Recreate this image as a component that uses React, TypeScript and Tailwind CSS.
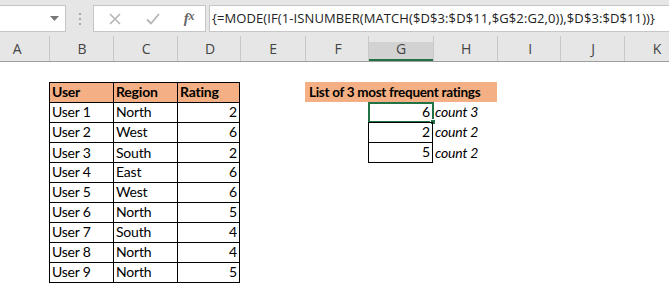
import * as React from 'react'

const cols = 'grid grid-cols-[49px_64px_64px_63px_65px_63px_65px_64px_63px_64px_45px]'
const letters = ['A', 'B', 'C', 'D', 'E', 'F', 'G', 'H', 'I', 'J', 'K']

const users = [
  ['User 1', 'North', 2],
  ['User 2', 'West', 6],
  ['User 3', 'South', 2],
  ['User 4', 'East', 6],
  ['User 5', 'West', 6],
  ['User 6', 'North', 5],
  ['User 7', 'South', 4],
  ['User 8', 'North', 4],
  ['User 9', 'North', 5],
] as const

const results = [
  [6, 'count 3'],
  [2, 'count 2'],
  [5, 'count 2'],
] as const

function FormulaBar() {
  return (
    <div className="flex h-[36px] items-center bg-[#e6e6e6] pt-px">
      <div className="flex h-[27px] w-[66px] items-center justify-end border border-l-0 border-[#c6c6c6] bg-white pr-[6px]">
        <svg width="9" height="5" viewBox="0 0 9 5">
          <path d="M0 0h9L4.5 5z" fill="#777" />
        </svg>
      </div>
      <div className="flex w-[27px] flex-col items-center gap-[3px]">
        <span className="h-[2px] w-[2px] bg-[#a9a9a9]" />
        <span className="h-[2px] w-[2px] bg-[#a9a9a9]" />
        <span className="h-[2px] w-[2px] bg-[#a9a9a9]" />
      </div>
      <div className="flex h-[27px] w-[113px] items-center border border-[#c6c6c6] bg-white">
        <div className="flex w-[42px] justify-center">
          <svg width="12" height="12" viewBox="0 0 12 12">
            <path d="M1 1l10 10M11 1L1 11" stroke="#b4b4b4" strokeWidth="1.6" />
          </svg>
        </div>
        <div className="flex w-[34px] justify-center">
          <svg width="14" height="12" viewBox="0 0 14 12">
            <path d="M1 6.5l4 4L13 1" stroke="#b4b4b4" strokeWidth="1.8" fill="none" />
          </svg>
        </div>
        <div className="flex w-[34px] justify-center pl-[4px] font-['Liberation_Serif',serif] text-[15px] font-bold italic text-[#666]">
          f<span className="text-[12px]">x</span>
        </div>
      </div>
      <div className="ml-[3px] flex h-[27px] flex-1 items-center border border-r-0 border-[#c6c6c6] bg-white pl-[2px] font-['Open_Sans',sans-serif] text-[13px] tracking-[0.1px] text-[#222]">
        {'{=MODE(IF(1-ISNUMBER(MATCH($D$3:$D$11,$G$2:G2,0)),$D$3:$D$11))}'}
      </div>
    </div>
  )
}

function ColumnHeaders() {
  return (
    <div className={`${cols} h-[26px] border-b border-[#9e9e9e] bg-[#e6e6e6] font-['Open_Sans',sans-serif] text-[14px] text-[#444]`}>
      {letters.map((l, i) => (
        <div
          key={l}
          className={`relative overflow-hidden ${i > 0 ? 'border-l border-[#c8c8c8]' : ''}`}
        >
          {l === 'G' && <div className="absolute inset-x-0 top-[6px] bottom-0 border-b-2 border-[#217346] bg-[#d2d2d2]" />}
          <div
            className={`relative flex h-full w-[64px] items-end justify-center pb-[2px] ${i === 0 ? 'ml-[-15px]' : ''}`}
          >
            {l}
          </div>
        </div>
      ))}
    </div>
  )
}

function Row({ children }: { children?: React.ReactNode }) {
  return <div className={`${cols} h-[20px]`}>{children}</div>
}

const cell = 'flex items-end pb-[1px] px-[2px] leading-[18px] whitespace-nowrap'

export default function App() {
  return (
    <div className="h-[308px] w-[669px] overflow-hidden bg-white font-['Lato',sans-serif] text-[14px] tracking-[-0.2px] text-black">
      <FormulaBar />
      <ColumnHeaders />
      <Row />
      <Row>
        <div />
        <div className={`${cell} border-l border-t border-black bg-[#f4b084] font-bold`}>User</div>
        <div className={`${cell} border-l border-t border-black bg-[#f4b084] font-bold`}>Region</div>
        <div className={`${cell} border-x border-t border-black bg-[#f4b084] font-bold`}>Rating</div>
        <div />
        <div className={`${cell} col-span-3 bg-[#f4b084] pl-[4px] text-[13.5px] font-bold tracking-[-0.3px]`}>
          List of 3 most frequent ratings
        </div>
      </Row>
      {users.map(([u, r, n], i) => {
        const res = results[i]
        const last = i === users.length - 1
        return (
          <Row key={u}>
            <div />
            <div className={`${cell} border-l border-t border-black ${last ? 'border-b' : ''}`}>{u}</div>
            <div className={`${cell} border-l border-t border-black ${last ? 'border-b' : ''}`}>{r}</div>
            <div className={`${cell} justify-end border-x border-t border-black ${last ? 'border-b' : ''}`}>{n}</div>
            <div />
            <div />
            {res ? (
              <div className={`${cell} relative justify-end border-x border-t border-black ${i === 2 ? 'border-b' : ''}`}>
                {i === 0 && (
                  <div className="absolute -left-px -top-px h-[21px] w-[66px] border-2 border-[#217346]">
                    <div className="absolute -bottom-[4px] -right-[4px] h-[6px] w-[6px] border border-white bg-[#217346]" />
                  </div>
                )}
                <span className="relative">{res[0]}</span>
              </div>
            ) : (
              <div />
            )}
            {res ? <div className={`${cell} italic`}>{res[1]}</div> : <div />}
          </Row>
        )
      })}
      <Row />
    </div>
  )
}
